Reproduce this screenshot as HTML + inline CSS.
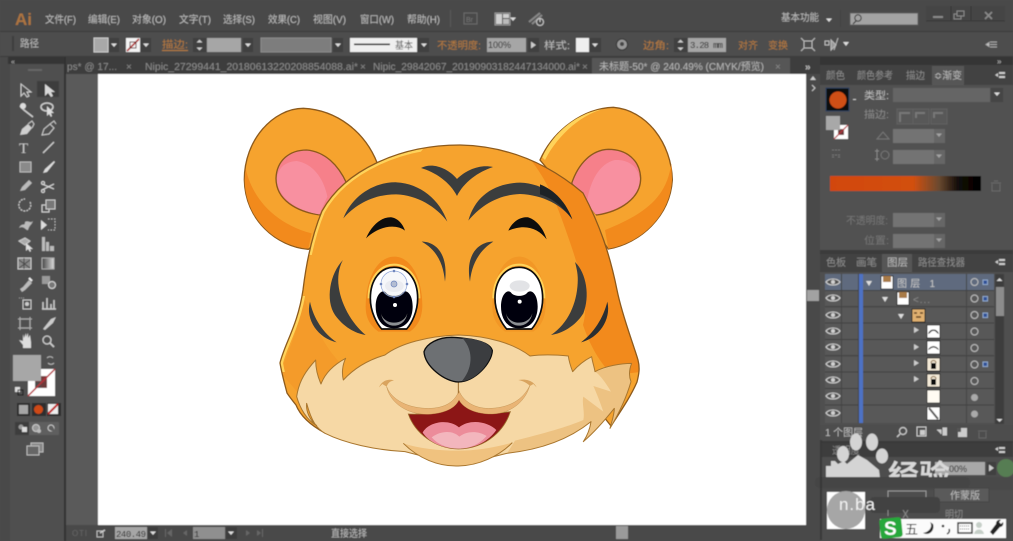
<!DOCTYPE html>
<html><head><meta charset="utf-8"><title>Illustrator</title>
<style>
html,body{margin:0;padding:0;width:1013px;height:541px;overflow:hidden;background:#4a4a4a}
svg{display:block;position:absolute;left:0;top:0}
text{font-family:"Liberation Sans","Noto Sans CJK SC",sans-serif;font-size:10px;fill:#bdbdbd}
.o{fill:#b97b3c}
.d{fill:#8a8a8a}
.t{fill:#8d8d8d}
.l{fill:none;stroke:#cfcfcf;stroke-width:1.2}
.f{fill:#cfcfcf}
</style></head><body>
<svg width="1013" height="541" viewBox="0 0 1013 541" xmlns="http://www.w3.org/2000/svg">
<defs>
<filter id="b" x="-2%" y="-2%" width="104%" height="104%"><feGaussianBlur stdDeviation="0.5"/></filter>
<filter id="b2" x="-2%" y="-2%" width="104%" height="104%"><feGaussianBlur stdDeviation="0.35"/></filter>
<linearGradient id="grad"><stop offset="0" stop-color="#d2470d"/><stop offset=".55" stop-color="#d2500f"/><stop offset=".72" stop-color="#6b4a30"/><stop offset=".85" stop-color="#120c08"/><stop offset="1" stop-color="#000"/></linearGradient>
<linearGradient id="g2"><stop offset="0" stop-color="#444"/><stop offset="1" stop-color="#ddd"/></linearGradient>
<g id="eye"><path d="M-7 0C-4-4 4-4 7 0C4 4-4 4-7 0Z" fill="#4f4f4f" stroke="#d0d0d0" stroke-width="1.1"/><circle r="2" fill="#d0d0d0"/></g>
<path id="dn" d="M-3-1.5H3L0 2Z" fill="#ddd"/>
<path id="rt" d="M-2-3.5V3.5L3 0Z" fill="#ccc"/>
<path id="headp" d="M303 290C306 265 312 235 322 211C345 170 400 145 460 145C510 146 550 165 583 193C600 225 610 255 617 290C622 315 632 340 638 360C640 368 639 374 637 382C630 398 620 412 611 426L600 412L585 418L325 433C310 425 300 415 296 405C292 400 289 396 287 393C285 385 282 375 280 363C284 345 298 325 303 290Z"/>
<clipPath id="headclip"><use href="#headp"/></clipPath>
<clipPath id="rimclip"><path d="M270 255H340L430 140H270ZM270 296H312V372H270Z"/></clipPath>
<path id="muzp" d="M65 350C72 300 95 270 122 240C122 265 128 290 138 312C150 280 175 255 212 235C202 255 200 280 205 300C240 262 285 238 330 225C375 190 460 168 550 165C640 168 715 190 765 228C810 222 850 225 880 228C882 245 888 262 893 275C910 255 930 240 950 230C952 245 958 262 960 275C990 258 1040 250 1070 250C1062 270 1062 290 1068 305C1055 350 1035 395 1005 445C1010 425 1018 405 1018 385C990 420 960 455 925 485C938 465 945 445 948 425C880 480 790 510 695 520L550 556L390 515C300 510 210 490 150 460C125 445 110 425 95 370C92 395 105 420 125 437C95 420 75 385 65 350Z"/>
<clipPath id="muzclip"><use href="#muzp"/></clipPath>
</defs>

<g filter="url(#b)">
<!-- base -->
<rect width="1013" height="541" fill="#4a4a4a"/>
<rect y="31" width="1013" height="1" fill="#3a3a3a"/>
<rect y="32" width="1013" height="25" fill="#4d4d4d"/>
<rect y="56" width="1013" height="1" fill="#3a3a3a"/>

<!-- menu -->
<text x="15" y="25" style="font-size:17px;font-weight:bold;fill:#ad7440">Ai</text>
<text x="45" y="23" textLength="31" lengthAdjust="spacingAndGlyphs">文件(F)</text>
<text x="88" y="23" textLength="32" lengthAdjust="spacingAndGlyphs">编辑(E)</text>
<text x="132" y="23" textLength="34" lengthAdjust="spacingAndGlyphs">对象(O)</text>
<text x="179" y="23" textLength="32" lengthAdjust="spacingAndGlyphs">文字(T)</text>
<text x="223" y="23" textLength="32" lengthAdjust="spacingAndGlyphs">选择(S)</text>
<text x="268" y="23" textLength="32" lengthAdjust="spacingAndGlyphs">效果(C)</text>
<text x="313" y="23" textLength="33" lengthAdjust="spacingAndGlyphs">视图(V)</text>
<text x="360" y="23" textLength="34" lengthAdjust="spacingAndGlyphs">窗口(W)</text>
<text x="407" y="23" textLength="33" lengthAdjust="spacingAndGlyphs">帮助(H)</text>
<rect x="450" y="10" width="1" height="17" fill="#5a5a5a"/>
<rect x="464" y="13" width="13" height="11" fill="none" stroke="#6d6d6d"/>
<text x="466" y="22" style="font-size:7px;fill:#777">Br</text>
<rect x="495" y="13" width="15" height="12" fill="#4a4a4a" stroke="#999"/>
<rect x="496" y="14" width="6" height="10" fill="#cfcfcf"/><rect x="503" y="14" width="6" height="4" fill="#cfcfcf"/><rect x="503" y="19" width="6" height="5" fill="#bbb"/>
<use href="#dn" x="513" y="19"/>
<path d="M529 22L540 13M532 24L542 15" stroke="#888" stroke-width="2"/>
<circle cx="540" cy="22" r="3.5" fill="#4a4a4a" stroke="#ccc"/><path d="M540 19v3" stroke="#ccc"/>
<text x="781" y="21" textLength="38" lengthAdjust="spacingAndGlyphs">基本功能</text>
<use href="#dn" x="829" y="20"/>
<rect x="840" y="10" width="1" height="17" fill="#404040"/>
<rect x="850" y="13" width="68" height="12" fill="#a3a3a3" stroke="#5c5c5c"/>
<circle cx="858" cy="18" r="3.2" fill="none" stroke="#333"/><path d="M856 21l-3 3" stroke="#333" stroke-width="1.2"/>
<rect x="926" y="6" width="79" height="15" fill="#444"/>
<path d="M926 21H1005M951 6V21M971 6V21" stroke="#383838" fill="none"/>
<rect x="933" y="16" width="10" height="2" fill="#8a8a8a"/>
<rect x="954" y="14" width="7" height="5" fill="none" stroke="#8a8a8a"/><rect x="957" y="11" width="7" height="5" fill="#444" stroke="#8a8a8a"/>
<path d="M985 12l7 7M992 12l-7 7" stroke="#8a8a8a" stroke-width="1.6"/>

<!-- control bar -->
<rect x="12" y="36" width="2" height="15" fill="#3c3c3c"/>
<text x="20" y="47" textLength="19" lengthAdjust="spacingAndGlyphs">路径</text>
<rect x="94" y="38" width="14" height="14" fill="#a8a8a8" stroke="#ccc"/>
<rect x="109" y="38" width="10" height="14" fill="#3f3f3f"/><use href="#dn" x="114" y="45"/>
<rect x="126" y="38" width="14" height="14" fill="#f4f4f4"/><path d="M127 51L139 39" stroke="#b02a2a" stroke-width="1.6"/><rect x="130" y="42" width="6" height="6" fill="none" stroke="#663333"/>
<rect x="141" y="38" width="10" height="14" fill="#3f3f3f"/><use href="#dn" x="146" y="45"/>
<text x="162" y="48" class="o" textLength="26" lengthAdjust="spacingAndGlyphs">描边:</text>
<rect x="162" y="50" width="26" height="1" fill="#b97b3c"/>
<rect x="193" y="38" width="13" height="14" fill="#3f3f3f"/><path d="M199.5 39.5l3 3h-6zM199.5 50.5l3-3h-6z" fill="#ccc"/>
<rect x="207" y="38" width="34" height="14" fill="#a6a6a6"/>
<rect x="243" y="38" width="10" height="14" fill="#3f3f3f"/><use href="#dn" x="248" y="45"/>
<rect x="261" y="38" width="70" height="14" fill="#7d7d7d" stroke="#8d8d8d"/>
<rect x="333" y="38" width="10" height="14" fill="#3f3f3f"/><use href="#dn" x="338" y="45"/>
<rect x="350" y="38" width="67" height="14" fill="#efefef"/>
<rect x="354" y="43.5" width="36" height="1.6" fill="#111"/>
<text x="395" y="49" style="fill:#555" textLength="18" lengthAdjust="spacingAndGlyphs">基本</text>
<rect x="418" y="38" width="11" height="14" fill="#3f3f3f"/><use href="#dn" x="424" y="45"/>
<text x="437" y="49" class="o" textLength="44" lengthAdjust="spacingAndGlyphs">不透明度:</text>
<rect x="487" y="38" width="39" height="14" fill="#a6a6a6"/>
<text x="488" y="48" style="font-size:9px;fill:#222">100%</text>
<rect x="528" y="38" width="11" height="14" fill="#3f3f3f"/><use href="#rt" x="533" y="45"/>
<text x="544" y="49" textLength="26" lengthAdjust="spacingAndGlyphs">样式:</text>
<rect x="576" y="38" width="13" height="14" fill="#efefef"/>
<rect x="590" y="38" width="11" height="14" fill="#3f3f3f"/><use href="#dn" x="595" y="45"/>
<circle cx="622" cy="44.500" r="5.500" fill="#999" stroke="#333"/><circle cx="622" cy="44" r="2" fill="#444"/>
<text x="643" y="49" class="o" textLength="26" lengthAdjust="spacingAndGlyphs">边角:</text>
<rect x="674" y="38" width="13" height="14" fill="#3f3f3f"/><path d="M680.500 39.500l3 3h-6zM680.500 50.500l3-3h-6z" fill="#ccc"/>
<rect x="688" y="38" width="38" height="14" fill="#a6a6a6"/>
<text x="690" y="48" style="font-size:9px;font-family:'Liberation Mono',monospace;fill:#222" textLength="33">3.28 mm</text>
<text x="738" y="49" class="o" textLength="20" lengthAdjust="spacingAndGlyphs">对齐</text>
<text x="768" y="49" class="o" textLength="20" lengthAdjust="spacingAndGlyphs">变换</text>
<rect x="804" y="41" width="8" height="7" fill="none" stroke="#bbb"/>
<path d="M801 38l3 3M815 38l-3 3M801 51l3-3M815 51l-3-3" stroke="#bbb" stroke-width="1.100"/>
<rect x="825" y="41" width="4" height="4" fill="none" stroke="#bbb"/>
<path d="M831 40l5 5-5 5zM838 38l-4 12" fill="#999" stroke="#bbb"/>
<path d="M843 42h6l-3 4z" fill="#ddd"/>
<path d="M986 44.500l3-2v4zM990 42h7M990 44.500h7M990 47h7" stroke="#aaa" fill="#ccc"/>

<!-- tab bar -->
<rect x="66" y="57" width="754" height="17" fill="#3e3e3e"/>
<text x="67" y="70" class="t" textLength="50" lengthAdjust="spacing">ps* @ 17...</text>
<text x="126" y="70" class="d">×</text>
<text x="145" y="70" class="t" textLength="213" lengthAdjust="spacingAndGlyphs">Nipic_27299441_20180613220208854088.ai*</text>
<text x="360" y="70" class="d">×</text>
<text x="373" y="70" class="t" textLength="207" lengthAdjust="spacingAndGlyphs">Nipic_29842067_20190903182447134000.ai*</text>
<text x="582" y="70" class="d">×</text>
<rect x="592" y="58" width="198" height="16" fill="#565656"/>
<text x="599" y="70" style="fill:#b8b8b8" textLength="165" lengthAdjust="spacingAndGlyphs">未标题-50* @ 240.49% (CMYK/预览)</text>
<text x="775" y="70" class="d">×</text>
<text x="805" y="70" style="fill:#bbb;font-weight:bold" textLength="9">»</text>

<!-- canvas area -->
<rect x="66" y="74" width="32" height="451" fill="#5a5a5a"/>
<rect x="98" y="74" width="708" height="451" fill="#fff"/>
<rect x="806" y="74" width="14" height="451" fill="#484848"/>
<rect x="807" y="290" width="12" height="11" fill="#a2a2a2"/>
<path d="M813 76l3 4h-6z" fill="#ccc"/>
<path d="M812 85l3 3-3 3" stroke="#ccc" fill="none"/>

<!-- left -->
<rect x="0" y="57" width="8" height="484" fill="#4a4a4a"/>
<rect x="8" y="57" width="56" height="7" fill="#343434"/>
<text x="11" y="64" style="font-size:7px;fill:#bbb">«</text>
<rect x="10" y="64" width="54" height="477" fill="#4f4f4f"/>
<rect x="64" y="57" width="2" height="484" fill="#303030"/>
<rect x="28" y="69" width="14" height="2" fill="#666"/>

<!-- tools -->
<rect x="37" y="81" width="22" height="16" fill="#3c3c3c"/>
<path d="M21 84v12l3-3 3 4 2-1-2-4h4z" fill="#4f4f4f" stroke="#d0d0d0"/>
<path d="M45 84v12l3-3 3 4 2-1-2-4h4z" fill="#d8d8d8"/>
<path d="M20 106l4 4 9 7" stroke="#cfcfcf" stroke-width="1.500" fill="none"/><circle cx="23" cy="106" r="3" fill="#ddd"/>
<ellipse cx="47" cy="107" rx="6" ry="4" fill="none" stroke="#cfcfcf" stroke-width="1.500"/><path d="M47 106v10l2-2 2 3 1-1-1-3h3z" fill="#ddd"/>
<path d="M20 135l2-6 6-5 4 4-5 6z" fill="#cfcfcf"/><path d="M28 124l4-3 2 3-2 4" stroke="#ccc" fill="none"/>
<path d="M42 135l2-6 6-5 4 4-5 6z" fill="none" stroke="#cfcfcf"/><path d="M50 124l4-3 2 3" stroke="#ccc" fill="none"/>
<text x="19" y="153" style="font-size:15px;font-family:'Liberation Serif',serif;fill:#ccc">T</text>
<path d="M43 153l11-11" stroke="#cfcfcf" stroke-width="1.300"/>
<rect x="20" y="162" width="11" height="10" fill="#8a8a8a" stroke="#bbb"/>
<path d="M43 173l4-1 8-10-1-1-9 8z" fill="#ddd"/>
<path d="M20 191l2-4 7-7 3 3-7 7z" fill="#bbb"/>
<path d="M42 184l12 5M42 190l12-6" stroke="#ddd" fill="none"/><circle cx="43" cy="183" r="1.500" fill="none" stroke="#ddd"/><circle cx="43" cy="191" r="1.500" fill="none" stroke="#ddd"/>
<path d="M30 202a6 6 0 1 1-5-3" class="l" stroke-dasharray="2 1"/>
<rect x="42" y="205" width="7" height="7" class="l"/><rect x="46" y="200" width="9" height="9" fill="#777" stroke="#ccc"/>
<path d="M19 228c3-6 6-1 6-6 4-2 5 2 8-1-2 5-3 3-5 9-2 1-4-5-9-2z" fill="#bbb"/>
<path d="M41 220v10l6-5z" fill="#ddd"/><path d="M48 219h7v11h-7" fill="none" stroke="#bbb" stroke-dasharray="1.500 1.500"/>
<path d="M19 241l6-3 5 3-5 4z" fill="#aaa" stroke="#ccc"/><path d="M26 243v8l2-2 2 3 1-1-1-2h3z" fill="#ddd"/>
<path d="M42 237h3v14h-3zM46 242h3v9h-3zM50 246h4v5h-4z" fill="#bbb"/>
<rect x="18" y="258" width="13" height="11" fill="#888" stroke="#ccc"/><path d="M19 260l11 8M30 260l-11 8M24 258v11" stroke="#444"/>
<rect x="42" y="258" width="12" height="11" fill="url(#g2)" stroke="#aaa"/>
<path d="M20 289l3-2 6-7 3 3-7 7-3 2z" fill="#bbb"/><path d="M29 278l3 3" stroke="#eee" stroke-width="2"/>
<rect x="42" y="276" width="8" height="8" fill="#999"/><circle cx="52" cy="285" r="3.500" fill="#777" stroke="#ddd"/>
<rect x="23" y="300" width="8" height="9" fill="none" stroke="#ccc"/><circle cx="27" cy="304" r="2" fill="#ccc"/><path d="M19 298h6" stroke="#999" stroke-dasharray="1 1"/>
<path d="M43 309v-7M47 309v-11M51 309v-5M54 309v-9M42 309h14" stroke="#ccc" stroke-width="1.500"/>
<rect x="20" y="319" width="10" height="9" fill="none" stroke="#ccc" stroke-width="1.200"/><path d="M18 319h14M18 328h14M20 317v13M30 317v13" stroke="#aaa"/>
<path d="M43 329l8-10 5-2-3 6-8 7z" fill="#ccc"/>
<path d="M19 340l4 5v3h8v-6l-1-7-2 3v-5l-2 4v-4l-2 5-1-4v7z" fill="#ddd"/>
<circle cx="47" cy="340" r="4" fill="none" stroke="#ccc" stroke-width="1.300"/><path d="M50 343l4 4" stroke="#ccc" stroke-width="1.800"/>
<path d="M47 358a4 4 0 0 1 6 0M54 363a4 4 0 0 1-6 0" stroke="#bbb" fill="none"/>
<rect x="28" y="369" width="27" height="27" fill="#fff"/>
<rect x="35" y="376" width="12" height="12" fill="#6d3a3a"/>
<rect x="41" y="376" width="6" height="6" fill="#773a3a"/><rect x="35" y="382" width="6" height="6" fill="#4d4d4d"/>
<path d="M28 396L55 369" stroke="#b8323a" stroke-width="1.500"/>
<rect x="13" y="355" width="28" height="26" fill="#a7a7a7"/>
<rect x="15" y="387" width="5" height="5" fill="#ddd"/><rect x="18" y="390" width="5" height="5" fill="none" stroke="#111"/>
<rect x="17" y="403" width="13" height="13" fill="#2e2e2e"/><rect x="19" y="405" width="9" height="9" fill="#a6a6a6"/>
<rect x="32" y="403" width="14" height="13" fill="#2e2e2e"/><circle cx="38.500" cy="409.500" r="4.500" fill="#cf4a12"/>
<rect x="47" y="403" width="14" height="13" fill="#2e2e2e"/><rect x="48" y="404" width="10" height="10" fill="#eee"/><path d="M48 414L58 404" stroke="#c02222" stroke-width="2"/>
<rect x="15" y="422" width="14" height="13" fill="#3e3e3e"/><rect x="29" y="422" width="15" height="13" fill="#5f5f5f"/><rect x="44" y="422" width="15" height="13" fill="#5f5f5f"/>
<circle cx="21" cy="427" r="2.500" fill="#999"/><rect x="22" y="427" width="5" height="5" fill="#ddd"/>
<circle cx="36" cy="428" r="3.500" fill="#999" stroke="#ccc"/><circle cx="39" cy="431" r="2" fill="#bbb"/>
<circle cx="51" cy="428" r="3" fill="none" stroke="#ccc"/><rect x="51" y="428" width="3" height="3" fill="#5f5f5f"/>
<rect x="31" y="443" width="12" height="9" fill="#888" stroke="#bbb"/><rect x="27" y="446" width="12" height="9" fill="#666" stroke="#bbb"/>

<!-- status -->
<rect x="66" y="525" width="754" height="16" fill="#4a4a4a"/>
<text x="72" y="536" style="font-size:8px;fill:#666" textLength="15">OTI</text>
<path d="M97 531h6v6h-6z" fill="none" stroke="#bbb"/><path d="M100 533l5-3" stroke="#ccc" stroke-width="1.500"/>
<rect x="115" y="527" width="32" height="12" fill="#a6a6a6"/>
<text x="116" y="537" style="font-size:9px;font-family:'Liberation Mono',monospace;fill:#222" textLength="30">240.49</text>
<rect x="148" y="527" width="10" height="12" fill="#3c3c3c"/><use href="#dn" x="153" y="533"/>
<path d="M167 533l5-4v8zM183 533l4-3v6z" fill="#666"/><rect x="165" y="529" width="1" height="8" fill="#666"/>
<rect x="193" y="527" width="32" height="12" fill="#8f8f8f"/>
<text x="194" y="537" style="font-size:9px;font-family:'Liberation Mono',monospace;fill:#222">1</text>
<rect x="226" y="527" width="11" height="12" fill="#3c3c3c"/><use href="#dn" x="231" y="533"/>
<path d="M246 530l4 3-4 3zM257 530l4 3-4 3z" fill="#666"/><rect x="262" y="529" width="1" height="8" fill="#666"/>
<text x="331" y="537" textLength="36" lengthAdjust="spacingAndGlyphs">直接选择</text>
<rect x="616" y="526" width="12" height="13" fill="#9a9a9a"/>

<!-- right panels -->
<rect x="820" y="57" width="193" height="484" fill="#4e4e4e"/>
<rect x="820" y="57" width="193" height="8" fill="#353535"/>
<text x="997" y="64" style="font-size:8px;fill:#bbb">»</text>
<rect x="820" y="65" width="193" height="20" fill="#434343"/>
<text x="826" y="79" class="t" textLength="19" lengthAdjust="spacingAndGlyphs">颜色</text>
<text x="857" y="79" class="t" textLength="36" lengthAdjust="spacingAndGlyphs">颜色参考</text>
<text x="906" y="79" class="t" textLength="19" lengthAdjust="spacingAndGlyphs">描边</text>
<rect x="932" y="66" width="32" height="19" fill="#565656"/>
<text x="934" y="79" style="fill:#bbb" textLength="28" lengthAdjust="spacingAndGlyphs">≎渐变</text>
<path d="M995 75l3-2v4zM999 72h6v2h-6zM999 76h6v2h-6z" fill="#ccc"/>
<rect x="820" y="85" width="193" height="168" fill="#515151"/>
<rect x="826" y="88" width="23" height="23" fill="#070707" stroke="#2e3f5e"/>
<circle cx="838" cy="100" r="8.500" fill="#cf4f12"/>
<rect x="853" y="99" width="3" height="1" fill="#ccc"/>
<text x="864" y="99" textLength="25" lengthAdjust="spacingAndGlyphs">类型:</text>
<rect x="893" y="88" width="97" height="14" fill="#656565"/>
<rect x="991" y="88" width="12" height="14" fill="#454545"/><use href="#dn" x="997" y="94"/>
<text x="864" y="118" class="d" textLength="25" lengthAdjust="spacingAndGlyphs">描边:</text>
<path d="M897 109h16v15h-16zM913 109h16v15h-16zM931 109h16v15h-16z" fill="#585858" stroke="#626262"/>
<path d="M900 122v-9h10M916 118v-5h9M934 118v-5h9" fill="none" stroke="#777" stroke-width="2"/>
<rect x="834" y="125" width="14" height="14" fill="#fff"/><rect x="838" y="129" width="6" height="6" fill="#6d3a3a"/><path d="M834 139L848 125" stroke="#b8323a" stroke-width="1.200"/>
<rect x="826" y="116" width="14" height="14" fill="#a8a8a8"/>
<path d="M832 150h8M832 155h8M832 157h2M838 157h2" stroke="#777" stroke-dasharray="2 1"/>
<path d="M877 139h12l-6-7z" fill="none" stroke="#777"/>
<rect x="893" y="129" width="41" height="14" fill="#737373"/><rect x="934" y="129" width="11" height="14" fill="#666"/><use href="#dn" x="939" y="135" opacity=".5"/>
<path d="M877 149v12M875 151h4M875 159h4" stroke="#888" fill="none"/><circle cx="885" cy="155" r="4" fill="none" stroke="#777"/>
<rect x="893" y="150" width="41" height="14" fill="#737373"/><rect x="934" y="150" width="11" height="14" fill="#666"/><use href="#dn" x="939" y="156" opacity=".5"/>
<rect x="830" y="176" width="151" height="15" fill="url(#grad)"/>
<path d="M991 183h10M992 184v7h8v-7M994 181h4" stroke="#6a6a6a" fill="none"/>
<text x="846" y="224" style="fill:#777" textLength="42" lengthAdjust="spacingAndGlyphs">不透明度:</text>
<rect x="893" y="213" width="41" height="14" fill="#737373"/><rect x="934" y="213" width="11" height="14" fill="#666"/><use href="#dn" x="939" y="219" opacity=".5"/>
<text x="864" y="244" style="fill:#777" textLength="25" lengthAdjust="spacingAndGlyphs">位置:</text>
<rect x="893" y="234" width="41" height="14" fill="#737373"/><rect x="934" y="234" width="11" height="14" fill="#666"/><use href="#dn" x="939" y="240" opacity=".5"/>

<!-- layers panel -->
<rect x="820" y="253" width="193" height="19" fill="#434343"/>
<rect x="820" y="250" width="193" height="4" fill="#3a3a3a"/>
<text x="826" y="266" class="t" textLength="20" lengthAdjust="spacingAndGlyphs">色板</text>
<text x="856" y="266" class="t" textLength="21" lengthAdjust="spacingAndGlyphs">画笔</text>
<rect x="882" y="254" width="30" height="18" fill="#565656"/>
<text x="887" y="266" style="fill:#bbb" textLength="21" lengthAdjust="spacingAndGlyphs">图层</text>
<text x="918" y="266" class="t" textLength="47" lengthAdjust="spacingAndGlyphs">路径查找器</text>
<path d="M995 262l3-2v4zM999 259h6v2h-6zM999 263h6v2h-6z" fill="#ccc"/>
<rect x="820" y="272" width="193" height="153" fill="#4f4f4f"/>
<rect x="825" y="274" width="169" height="149" fill="#585858"/>
<rect x="825" y="274" width="169" height="16" fill="#5f6a7e"/>
<path d="M825 290.500H994M825 306.800H994M825 323H994M825 339.500H994M825 355.800H994M825 372H994M825 388.500H994M825 405H994" stroke="#3f3f3f"/>
<path d="M841.500 274V423M858.500 274V423M966.500 274V423" stroke="#434343"/>
<rect x="859" y="274" width="4" height="149" fill="#4e72c4"/>
<use href="#eye" x="833" y="282"/><use href="#eye" x="833" y="298"/><use href="#eye" x="833" y="315"/><use href="#eye" x="833" y="331"/><use href="#eye" x="833" y="347"/><use href="#eye" x="833" y="364"/><use href="#eye" x="833" y="380"/><use href="#eye" x="833" y="396"/><use href="#eye" x="833" y="413"/>
<path d="M866 281h6l-3 5zM882 297h6l-3 5zM898 314h6l-3 5z" fill="#ddd"/>
<path d="M914 327v6l5-3zM914 344v6l5-3zM914 360v6l5-3zM914 376v6l5-3z" fill="#ccc"/>
<!-- thumbs -->
<rect x="881" y="276" width="12" height="13" fill="#fff" stroke="#222"/><rect x="883" y="276" width="8" height="6" fill="#a87a46"/>
<text x="897" y="287" style="fill:#c8c8c8" textLength="38" lengthAdjust="spacing">图层 1</text>
<rect x="897" y="292" width="12" height="13" fill="#fff" stroke="#222"/><rect x="899" y="292" width="8" height="6" fill="#a87a46"/>
<text x="913" y="303" class="d" textLength="17" lengthAdjust="spacing">&lt;...</text>
<rect x="912" y="309" width="13" height="13" fill="#e0b070" stroke="#222"/><path d="M914 313h3M920 313h3M916 317h5" stroke="#5a3c1c" stroke-width="1.500"/>
<rect x="927" y="325" width="13" height="13" fill="#fff" stroke="#222"/><path d="M928 334c2-6 9-6 11 0l-2-1c-2-3-5-3-7 0z" fill="#111"/>
<rect x="927" y="341" width="13" height="13" fill="#fff" stroke="#222"/><path d="M928 350c2-5 9-5 11 0l-2-1c-2-2-5-2-7 0z" fill="#111"/>
<rect x="927" y="358" width="13" height="13" fill="#f4ead8" stroke="#222"/><rect x="931" y="363" width="5" height="6" fill="#111"/><path d="M931 363a2.500 2.500 0 0 1 5 0" fill="none" stroke="#7a5a2a"/>
<rect x="927" y="374" width="13" height="13" fill="#f4ead8" stroke="#222"/><rect x="931" y="379" width="5" height="6" fill="#111"/><path d="M931 379a2.500 2.500 0 0 1 5 0" fill="none" stroke="#7a5a2a"/>
<rect x="927" y="390" width="13" height="13" fill="#fffbf2" stroke="#333"/>
<rect x="927" y="407" width="13" height="13" fill="#fff" stroke="#333"/><path d="M929 408l9 11" stroke="#555" stroke-width="2"/>
<g fill="none" stroke="#c0c0c0"><circle cx="974.500" cy="282" r="3.500"/><circle cx="974.500" cy="298.500" r="3.500"/><circle cx="974.500" cy="315" r="3.500"/><circle cx="974.500" cy="331.500" r="3.500"/><circle cx="974.500" cy="348" r="3.500"/><circle cx="974.500" cy="364.500" r="3.500"/><circle cx="974.500" cy="381" r="3.500"/></g>
<circle cx="974.500" cy="397.500" r="3.500" fill="#aaa"/><circle cx="974.500" cy="414" r="3.500" fill="#aaa"/>
<g fill="#2d4f97" stroke="#8fa8cc"><rect x="983" y="280" width="4.500" height="4.500"/><rect x="983" y="296.500" width="4.500" height="4.500"/><rect x="983" y="313" width="4.500" height="4.500"/><rect x="983" y="362" width="4.500" height="4.500"/></g>
<rect x="995" y="274" width="9" height="150" fill="#3e3e3e"/>
<path d="M999.500 278l3 3h-6zM999.500 422l3-3h-6z" fill="#ddd"/>
<rect x="996" y="287" width="8" height="29" fill="#8c8c8c"/>
<text x="825" y="436" textLength="38" lengthAdjust="spacing">1 个图层</text>
<circle cx="903" cy="431" r="3.500" fill="none" stroke="#ccc" stroke-width="1.200"/><path d="M900 434l-3 3" stroke="#ccc" stroke-width="1.300"/>
<rect x="917" y="427" width="9" height="9" fill="none" stroke="#ccc"/><rect x="920" y="430" width="5" height="5" fill="#ccc"/>
<path d="M937 430h4v4M947 428h-4v7h4" fill="#ccc" stroke="#ccc"/>
<rect x="958" y="428" width="9" height="9" fill="#ccc"/><rect x="957" y="428" width="4" height="4" fill="#555"/>
<path d="M978 431h9M979 432v6h7v-6" stroke="#666" fill="none"/>

<!-- lower panel -->
<rect x="820" y="441" width="193" height="2" fill="#383838"/>
<rect x="820" y="443" width="193" height="14" fill="#3c3c3c"/>
<text x="832" y="454" class="d" textLength="28" lengthAdjust="spacingAndGlyphs">透明度</text>
<path d="M995 449l3-2v4zM999 447h6v2h-6zM999 451h6v2h-6z" fill="#ccc"/>
<rect x="820" y="457" width="193" height="84" fill="#4d4d4d"/>
<rect x="935" y="462" width="50" height="13" fill="#a8a8a8"/>
<text x="949" y="472" style="font-size:9px;fill:#222">00%</text>
<rect x="987" y="462" width="9" height="13" fill="#3f3f3f"/><use href="#rt" x="991" y="468"/>
<circle cx="1006" cy="468" r="9" fill="#567d52"/>

<!-- watermark paw + text (cut off by band below) -->
<g fill="#d4d4d4">
<ellipse cx="856" cy="442" rx="6" ry="8.500"/>
<ellipse cx="872" cy="442" rx="6" ry="8.500"/>
<ellipse cx="843" cy="454" rx="6" ry="8"/>
<ellipse cx="882" cy="456" rx="6" ry="7.500"/>
<path d="M826 478v-12h5v-5h4l3 3 6-3 3 3 11-9 9 5 12 10 1 8z"/>
</g>
<text x="888" y="483" style="font-size:26px;font-weight:bold;fill:#d8d8d8" textLength="62" lengthAdjust="spacingAndGlyphs">经验</text>

<rect x="820" y="477" width="193" height="13" fill="#4a4a4a"/>
<rect x="815" y="477" width="155" height="11" rx="5" fill="#444"/>
<rect x="888" y="491" width="38" height="12" fill="none" stroke="#999"/>
<rect x="934" y="488" width="55" height="14" fill="#5a5a5a" stroke="#444"/>
<text x="950" y="499" textLength="30" lengthAdjust="spacingAndGlyphs">作蒙版</text>
<rect x="827" y="492" width="38" height="37" fill="#fff"/>
<circle cx="846" cy="510" r="19" fill="#a6a6a6"/>
<rect x="870" y="497" width="70" height="16" fill="#434343" rx="4"/>
<text x="945" y="518" class="d" textLength="18" lengthAdjust="spacingAndGlyphs">明切</text>
<path d="M888 510v6M903 510l5 8M908 510l-5 8" stroke="#888" fill="none"/>
<rect x="820" y="440" width="2" height="100" fill="#383838"/>
<text x="839" y="510" style="font-size:17px;fill:#f2f2f2" textLength="36">n.ba</text>

<!-- sogou IME -->
<rect x="880" y="519" width="126" height="19" fill="#fbfbfb"/>
<rect x="880" y="518" width="22" height="20" rx="3" fill="#27a83a" transform="rotate(-6 891 528)"/>
<text x="884" y="535" style="font-size:19px;font-weight:bold;fill:#fff">S</text>
<text x="905" y="534" style="font-size:13px;fill:#222">五</text>
<path d="M930 522c3 4 0 10-7 11 6 3 12-2 10-9z" fill="#222"/>
<circle cx="943" cy="526" r="1.300" fill="#222"/><path d="M949 529c1 2 0 4-2 5" stroke="#222" fill="none" stroke-width="1.500"/>
<rect x="958" y="523" width="14" height="10" fill="#fff" stroke="#333" stroke-width="1.500"/><path d="M960 526h10M960 529h10" stroke="#333" stroke-dasharray="1 1"/>
<circle cx="979" cy="525" r="3" fill="#c6cfc8"/><path d="M974 534c1-6 9-6 10 0z" fill="#c6cfc8"/>
<path d="M993 535l7-8c2 0 4-2 3-5l-2 2-2-2 2-2c-3-1-5 1-5 4l-6 8z" fill="#222"/>
</g>

<!-- TIGER -->
<g filter="url(#b2)">
<!-- left ear -->
<g transform="translate(240,100) scale(.33333)">
<path d="M205 448C110 440 15 360 13 240C12 120 100 25 190 25C290 30 375 95 412 190L300 380Z" fill="#f6a32f" stroke="#8d5a1c" stroke-width="4"/>
<path d="M17 205C35 290 100 370 215 400L205 446C105 438 15 355 14 240Z" fill="#f28a1e"/>
<path d="M240 345C170 335 108 300 108 235C110 180 150 150 200 150C255 155 295 195 320 250Z" fill="#f6808a" stroke="#8d5a1c" stroke-width="4"/>
<path d="M238 343C175 333 112 295 111 238C112 205 135 185 170 183C215 190 250 230 262 290Z" fill="#f890a0"/>
</g>
<!-- right ear -->
<g transform="translate(450,100) scale(.33333)">
<path d="M270 180C310 90 400 25 490 22C590 30 665 130 667 240C660 350 570 430 475 447L370 300Z" fill="#f6a32f" stroke="#8d5a1c" stroke-width="4"/>
<path d="M277 172C310 95 385 38 460 27C390 45 320 110 285 180Z" fill="#ffd35a"/>
<path d="M664 190C650 290 590 340 465 390L475 446C570 430 660 350 666 240Z" fill="#f28a1e"/>
<path d="M440 345C510 335 572 295 572 235C570 180 530 148 475 148C425 150 385 190 365 250Z" fill="#f6808a" stroke="#8d5a1c" stroke-width="4"/>
<path d="M437 343C505 333 568 295 569 238C566 200 535 178 495 180C450 190 420 240 410 310Z" fill="#f890a0"/>
</g>
<!-- head -->
<use href="#headp" fill="#f6a32f"/>
<g clip-path="url(#headclip)">
<path d="M507 140C535 155 552 190 565 228C578 265 590 300 583 325C590 345 598 360 612 375L660 370V140Z" fill="#f28a1e"/>
<path d="M280 372C292 345 298 325 305 300C318 335 328 350 342 365L300 395Z" fill="#f49b29"/>
<g clip-path="url(#rimclip)"><use href="#headp" fill="none" stroke="#ffd35a" stroke-width="6"/></g>
</g>
<use href="#headp" fill="none" stroke="#8d5a1c" stroke-width="1.300" stroke-linejoin="round"/>
<!-- muzzle -->
<g transform="translate(275,280) scale(.33333)">
<use href="#muzp" fill="#f6d8a5"/>
<g clip-path="url(#muzclip)">
<path d="M720 482C800 462 880 440 925 420C930 395 920 370 925 350C945 365 965 380 985 395C975 365 965 340 955 318L1008 335C990 305 975 285 960 275L1100 230V500L690 530Z" fill="#edc282"/>
</g>
<use href="#muzp" fill="none" stroke="#a9762e" stroke-width="3" stroke-linejoin="round"/>
<!-- chin -->
<path d="M385 490C430 535 490 560 550 558C610 557 670 530 712 488C650 505 600 512 550 512C490 512 430 505 385 490Z" fill="#f0c27f"/>
<path d="M385 490C430 535 490 560 550 558C610 557 670 530 712 488" fill="none" stroke="#a9762e" stroke-width="3"/>
<!-- mouth -->
<path d="M400 402C450 405 510 395 552 358C590 395 650 405 706 395C690 445 640 505 550 507C480 505 420 460 400 402Z" fill="#8c1212" stroke="#9a6a2a" stroke-width="2.500"/>
<path d="M443 458C460 425 520 415 552 442C585 415 640 425 664 450C640 485 600 505 550 506C505 505 465 490 443 458Z" fill="#ec8c9a"/>
<path d="M470 472C500 450 535 452 553 470C575 452 610 452 635 468C610 495 585 505 550 506C520 505 490 495 470 472Z" fill="#f3b6bd"/>
<!-- lips -->
<path d="M335 320C345 370 400 405 460 403C510 400 540 385 552 360C565 385 600 400 640 402C700 405 750 370 765 315C745 360 700 385 640 385C600 385 565 365 552 332C540 365 510 385 460 385C400 385 350 360 335 320Z" fill="#e9b474" stroke="#b28443" stroke-width="1"/>
<path d="M312 322C320 302 340 296 357 301C345 303 338 310 335 320L322 312Z" fill="#d9a45e"/>
<path d="M785 322C775 302 755 296 730 300C745 303 758 310 765 318L775 312Z" fill="#d9a45e"/>
<path d="M550 300V340" stroke="#9a6a2a" stroke-width="3"/>
<!-- nose -->
<path d="M447 215C455 190 490 172 530 172C590 175 645 185 652 212C650 250 600 305 550 306C510 305 450 260 447 215Z" fill="#6d7073" stroke="#111" stroke-width="4"/>
<path d="M562 174C600 176 645 185 650 212C648 250 600 303 560 304C590 270 600 215 562 174Z" fill="#3a3d40"/>
<!-- cheek stripes -->
<path d="M204 -60C165 -20 150 60 180 105C205 140 240 160 272 165C230 130 195 70 190 10C188 -20 195 -45 204 -60Z" fill="#3a3c3e"/>
<path d="M105 65C90 120 130 175 185 187C145 160 115 115 105 65Z" fill="#3a3c3e"/>
<path d="M900 -54C935 -20 945 50 925 100C900 140 860 160 828 165C880 130 905 70 908 10C910 -15 905 -35 900 -54Z" fill="#3a3c3e"/>
<path d="M997 65C1010 120 970 175 918 187C955 160 985 115 997 65Z" fill="#2c2e30"/>
</g>
<!-- forehead V -->
<path d="M421 168C432 162 448 168 457 179C466 170 480 164 493 167C478 172 464 182 457 196C450 182 435 172 421 168Z" fill="#3a3c3e"/>
<g transform="translate(240,100) scale(.33333)">
<path d="M310 355C335 290 400 245 470 247C540 250 600 300 622 365C590 320 530 285 470 283C400 282 345 315 310 355Z" fill="#3a3c3e"/>
<path d="M378 415C395 375 425 350 455 352C475 355 490 375 495 392C470 372 420 375 378 415Z" fill="#0c0c0c"/>
<path d="M545 425C590 425 625 465 615 545C610 490 590 450 545 425Z" fill="#3a3c3e"/>
</g>
<g transform="translate(450,100) scale(.33333)">
<path d="M55 362C75 290 130 250 210 248C280 250 345 295 367 358C335 315 280 285 210 282C140 285 90 320 55 362Z" fill="#3a3c3e"/>
<path d="M270 253C315 270 350 310 367 358C340 322 310 295 270 283Z" fill="#1c2026"/>
<path d="M175 392C190 360 215 350 235 352C260 360 280 385 290 418C265 385 225 370 175 392Z" fill="#0c0c0c"/>
<path d="M130 425C85 425 45 465 60 545C65 490 90 450 130 425Z" fill="#3a3c3e"/>
</g>
<!-- eyes -->
<g transform="translate(275,280) scale(.33333)">
<path d="M272 80C272 -10 310 -70 358 -70C405 -70 442 -10 442 80C440 120 425 140 405 155H310C290 140 272 120 272 80Z" fill="#f28a1e"/>
<path d="M652 80C652 -10 688 -70 732 -70C778 -70 812 -10 812 80C810 120 795 140 775 155H690C670 140 652 120 652 80Z" fill="#f29726"/>
<path d="M281 55C281 -5 315 -46 357 -46C400 -46 433 -5 433 55" fill="none" stroke="#ffd35a" stroke-width="6"/>
<path d="M655 55C655 -5 690 -46 732 -46C775 -46 808 -5 808 55" fill="none" stroke="#ffd35a" stroke-width="6"/>
<path d="M286 55C286 0 315 -38 357 -38C400 -38 428 0 428 55C428 95 410 130 395 147H320C305 130 286 95 286 55Z" fill="#fff" stroke="#0a0a0a" stroke-width="5"/>
<path d="M660 55C660 0 690 -38 732 -38C775 -38 803 0 803 55C803 95 785 130 770 147H695C680 130 660 95 660 55Z" fill="#fff" stroke="#0a0a0a" stroke-width="5"/>
<path d="M302 80C302 40 325 25 335 40C345 50 370 50 380 40C392 25 413 40 413 80C413 115 395 145 357 145C320 145 302 115 302 80Z" fill="#060608"/>
<path d="M678 80C678 40 700 25 710 40C720 50 745 50 755 40C767 25 788 40 788 80C788 115 770 145 732 145C695 145 678 115 678 80Z" fill="#060608"/>
<path d="M318 100C322 125 340 137 357 137C375 137 393 125 397 100C392 118 375 128 357 128C340 128 322 118 318 100Z" fill="#8c8f93"/>
<path d="M693 100C697 125 715 137 732 137C750 137 768 125 772 100C767 118 750 128 732 128C715 128 697 118 693 100Z" fill="#8c8f93"/>
<circle cx="360" cy="75" r="6" fill="#fff"/>
<circle cx="734" cy="65" r="6" fill="#fff"/>
<ellipse cx="358" cy="18" rx="28" ry="18" fill="#e8e9ec"/>
<ellipse cx="734" cy="18" rx="30" ry="17" fill="#e2e3e6"/>
</g>
<!-- selection widget -->
<circle cx="394" cy="284" r="13" fill="#eef0f5" fill-opacity=".5" stroke="#8da4d8" stroke-width=".7"/>
<circle cx="394" cy="284" r="3" fill="#b4bdd2" stroke="#6f86bd" stroke-width=".7"/>
<g fill="#6f86bd"><circle cx="381" cy="284" r="1.300"/><circle cx="407" cy="284" r="1.300"/><circle cx="394" cy="271" r="1.300"/><circle cx="394" cy="297" r="1.300"/></g>
</g>
</svg>
</body></html>
